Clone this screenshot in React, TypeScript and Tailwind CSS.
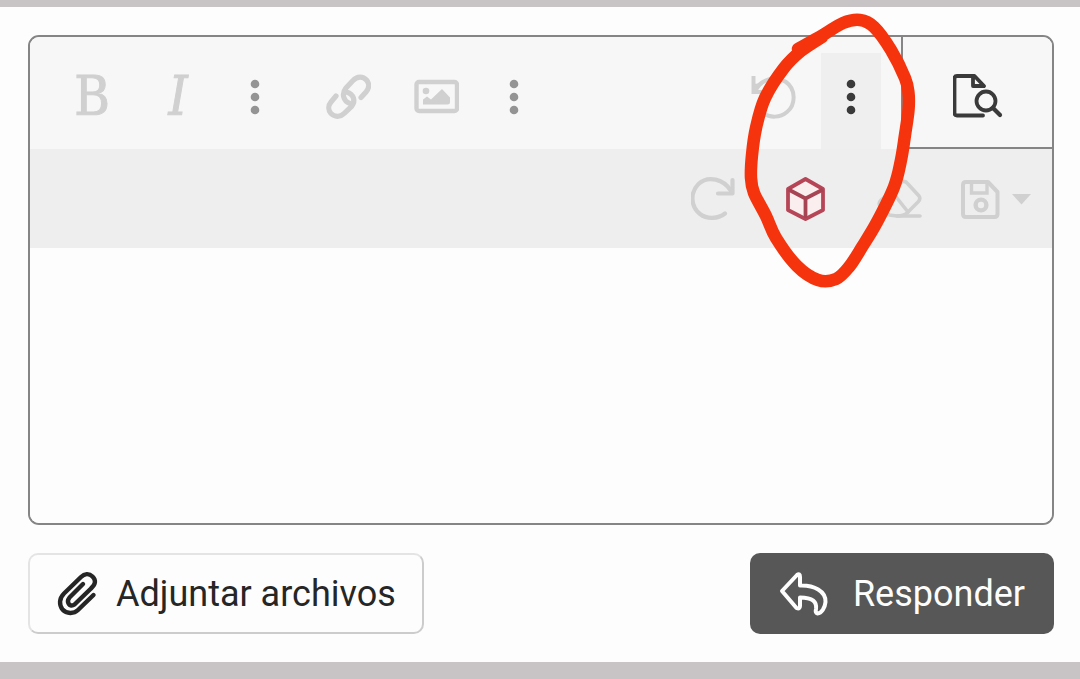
import type { ReactNode } from "react";

type ToolProps = { label: string; width?: string; className?: string; children: ReactNode };

function Tool({ label, width = "w-[88px]", className = "", children }: ToolProps) {
  return (
    <button
      type="button"
      aria-label={label}
      className={`flex shrink-0 items-center justify-center ${width} ${className}`}
    >
      {children}
    </button>
  );
}

function Dots() {
  return (
    <svg width="10" height="36" viewBox="0 0 10 36" fill="currentColor">
      <circle cx="5" cy="5" r="4.3" />
      <circle cx="5" cy="18" r="4.3" />
      <circle cx="5" cy="31" r="4.3" />
    </svg>
  );
}

function LinkIcon() {
  return (
    <svg width="46" height="46" viewBox="325 74 46 46" fill="none" stroke="currentColor" strokeWidth="5.2" strokeLinecap="round">
      <path d="M350 103.500C343 101 341.500 93.500 346 88L353 80.500C357 76 363 76 366.500 80C370 84 369 88.500 366 92L361 97.500" />
      <path d="M346.500 92C354 94.500 356 101 351.500 106.500L344 113.500C340 117.500 334.500 117 331 113.500C328 110 328 105.500 331 102L336 96" />
    </svg>
  );
}

function ImageIcon() {
  return (
    <svg width="46" height="36" viewBox="413 79 46 36" fill="none">
      <rect x="416.500" y="82" width="40.500" height="29" rx="2.500" stroke="currentColor" strokeWidth="4.400" />
      <circle cx="426" cy="91" r="3.300" fill="currentColor" />
      <path d="M423 104.500V99.500L427 96.500L431 99.500L442 89L450 97.500V102Q450 104.500 447.500 104.500Z" fill="currentColor" />
    </svg>
  );
}

function UndoIcon() {
  return (
    <svg width="46" height="46" viewBox="751 73 46 46" fill="none" stroke="currentColor" strokeWidth="4">
      <path d="M754.500 75V91H770" />
      <path d="M754 83L764 82L757 92Z" fill="currentColor" stroke="none" />
      <path d="M756 89C763 78 777 74 787 81C797 88 797 104 788 111C781 117 771 117 764 112" />
    </svg>
  );
}

function RedoIcon() {
  return (
    <svg width="46" height="46" viewBox="690 176 46 46" fill="none" stroke="currentColor" strokeWidth="4.200" strokeLinecap="round">
      <path d="M731.500 180V193.500H717" strokeLinejoin="round" />
      <path d="M730 191C723 179 707 175 697.500 184C688.500 193 690 207 699 214C706 219.500 717 219 724 213.500" />
    </svg>
  );
}

function CubeIcon() {
  return (
    <svg width="44" height="46" viewBox="783 176 44 46" strokeWidth="3.800" strokeLinejoin="round">
      <path d="M804.500 179L822 189V210L804.500 219L787 210V189Z" fill="#fbeeee" stroke="#b64657" />
      <path d="M787.500 189.500L804.500 198.500L822 189.500M804.500 198.500V218" fill="none" stroke="#a74454" />
    </svg>
  );
}

function EraserIcon() {
  return (
    <svg width="48" height="46" viewBox="876 176 48 46" fill="none" stroke="currentColor" strokeWidth="3.600" strokeLinecap="round" strokeLinejoin="round">
      <path d="M901 182Q904 180 907 184L918 196Q920 199 917 202L906 213Q903 216 896 216L888 215L879 206Q877 203 880 200Z" />
      <path d="M892 193L907 212M896 216H919" />
    </svg>
  );
}

function SaveIcon() {
  return (
    <svg width="72" height="42" viewBox="960 177 72 42" fill="none" stroke="currentColor" strokeWidth="4">
      <path d="M966 181H988L997.500 191V213Q997.500 216 994.500 216H966Q963 216 963 213V184Q963 181 966 181Z" strokeLinejoin="round" />
      <path d="M971.500 181V192H987V181" strokeWidth="3.400" />
      <circle cx="981" cy="204" r="5.400" strokeWidth="4.400" />
      <path d="M1012 193H1031L1021.500 203.500Z" fill="currentColor" stroke="none" />
    </svg>
  );
}

function PreviewIcon() {
  return (
    <svg width="50" height="46" viewBox="953 74 50 46" fill="none" stroke="currentColor" strokeWidth="3.800" strokeLinecap="round" strokeLinejoin="round">
      <path d="M983 116.500H957Q954.500 116.500 954.500 114V79.500Q954.500 77 957 77H974.500L984 87H973V77" />
      <circle cx="986" cy="102" r="9.500" />
      <path d="M993 109L1000 116" strokeWidth="4.200" />
    </svg>
  );
}

function ClipIcon() {
  return (
    <svg width="42" height="46" viewBox="57 571 42 46" fill="none" stroke="currentColor" strokeWidth="4.400" strokeLinecap="round" strokeLinejoin="round">
      <path d="M84 584L70.500 597.500C67 602 70.500 608 75.500 604.500L92 588.500C97 584 97 580 93.500 576.500C90 573 85.500 573.500 82 577L65 593.500C60 598.500 60 605 63.500 609.500C67.500 614 75 614 79 610L94.500 595" />
    </svg>
  );
}

function ReplyIcon() {
  return (
    <svg width="50" height="46" viewBox="779 571 50 46" fill="none" stroke="currentColor" strokeWidth="4" strokeLinejoin="round">
      <path d="M782 591L797 575Q800 573 800 577V585.500C814 585 826 591 825.500 602C825 608 821.500 613 817.500 613.500Q815 613 816 609C817 602 813 597.500 800 597.500V606Q800 609.500 796.500 608Z" />
    </svg>
  );
}

type Point = [number, number];

const loopPoints: Point[] = [
  [798, 49], [823, 35], [843, 23], [860, 20], [874, 27], [891, 50], [905, 78], [908.5, 93],
  [908.5, 110], [905, 135], [901, 160], [894, 187], [877, 222], [862, 247], [849, 267],
  [836, 279], [818, 280], [797, 266], [776, 238], [766, 216], [754, 193], [751, 178],
  [752, 155], [756, 128], [765, 98], [784, 68], [801, 51], [822, 37],
];

function smoothPath(points: Point[]) {
  let path = `M${points[0][0]} ${points[0][1]}`;
  for (let i = 0; i < points.length - 1; i++) {
    const before = points[Math.max(i - 1, 0)];
    const from = points[i];
    const to = points[i + 1];
    const after = points[Math.min(i + 2, points.length - 1)];
    path += `C${from[0] + (to[0] - before[0]) / 6} ${from[1] + (to[1] - before[1]) / 6}`;
    path += ` ${to[0] - (after[0] - from[0]) / 6} ${to[1] - (after[1] - from[1]) / 6} ${to[0]} ${to[1]}`;
  }
  return path;
}

function Annotation() {
  return (
    <svg
      aria-hidden="true"
      className="pointer-events-none absolute -top-[25px] right-[134px]"
      width="180"
      height="280"
      viewBox="740 10 180 280"
      fill="none"
      stroke="#f5330d"
      strokeWidth="12.500"
      strokeLinecap="round"
      strokeLinejoin="round"
    >
      <path d={smoothPath(loopPoints)} />
    </svg>
  );
}

export default function App() {
  return (
    <div className="min-h-screen bg-[#c8c4c5] pt-[7px] font-['Roboto',sans-serif]">
      <main className="bg-[#fdfdfd] p-7 pr-[26px]">
        <div className="relative">
          <section className="flex flex-col overflow-hidden rounded-[11px] border-2 border-[#858585]">
            <div role="toolbar" aria-label="Formato" className="flex h-28 bg-[#f7f7f7] text-[#d0d0d0]">
              <div className="flex flex-1 pl-[18px] pt-2">
                <Tool label="Negrita">
                  <span className="font-['DejaVu_Serif_Condensed','DejaVu_Serif',serif] text-[54px] leading-none [-webkit-text-stroke:1px_#d0d0d0]">B</span>
                </Tool>
                <Tool label="Cursiva" width="w-[84px]">
                  <span className="font-['DejaVu_Serif_Condensed','DejaVu_Serif',serif] text-[54px] italic leading-none [-webkit-text-stroke:1px_#d0d0d0]">I</span>
                </Tool>
                <Tool label="Más formato" width="w-[70px]" className="text-[#949494]">
                  <Dots />
                </Tool>
                <Tool label="Enlace" className="ml-[14px]">
                  <LinkIcon />
                </Tool>
                <Tool label="Imagen">
                  <ImageIcon />
                </Tool>
                <Tool label="Más inserciones" width="w-[68px]" className="text-[#949494]">
                  <Dots />
                </Tool>
              </div>
              <div className="flex gap-1 pr-5">
                <Tool label="Deshacer" className="pt-2">
                  <UndoIcon />
                </Tool>
                <Tool label="Más opciones" width="w-[60px]" className="mt-4 bg-[#efefef] pb-2 text-[#3a3a3a]">
                  <Dots />
                </Tool>
              </div>
              <Tool
                label="Vista previa"
                width="w-[151px]"
                className="border-b-2 border-l-2 border-[#858585] pt-2 text-[#3a3a3a]"
              >
                <PreviewIcon />
              </Tool>
            </div>
            <div role="toolbar" aria-label="Historial" className="flex h-[99px] justify-end gap-1 bg-[#eeeeee] pr-3 text-[#d0d0d0]">
              <Tool label="Rehacer">
                <RedoIcon />
              </Tool>
              <Tool label="Bloque">
                <CubeIcon />
              </Tool>
              <Tool label="Borrar formato" width="w-[94px]">
                <EraserIcon />
              </Tool>
              <Tool label="Borradores">
                <SaveIcon />
              </Tool>
            </div>
            <textarea
              aria-label="Escribe tu respuesta"
              className="block h-[275px] w-full resize-none bg-[#fdfdfd] p-6 text-4xl text-[#222222] outline-none"
            />
          </section>
          <Annotation />
        </div>
        <div className="mt-7 flex items-center justify-between">
          <button
            type="button"
            className="flex h-[81px] items-center gap-[18px] rounded-[10px] border-2 border-b-[#cccccc] border-l-[#e4e4e4] border-r-[#cccccc] border-t-[#e4e4e4] px-[26px] text-4xl text-[#262626]"
          >
            <ClipIcon />
            Adjuntar archivos
          </button>
          <button
            type="button"
            className="flex h-[81px] items-center gap-6 rounded-[10px] bg-[#575757] px-[29px] text-4xl text-[#fdfdfd]"
          >
            <ReplyIcon />
            Responder
          </button>
        </div>
      </main>
    </div>
  );
}
